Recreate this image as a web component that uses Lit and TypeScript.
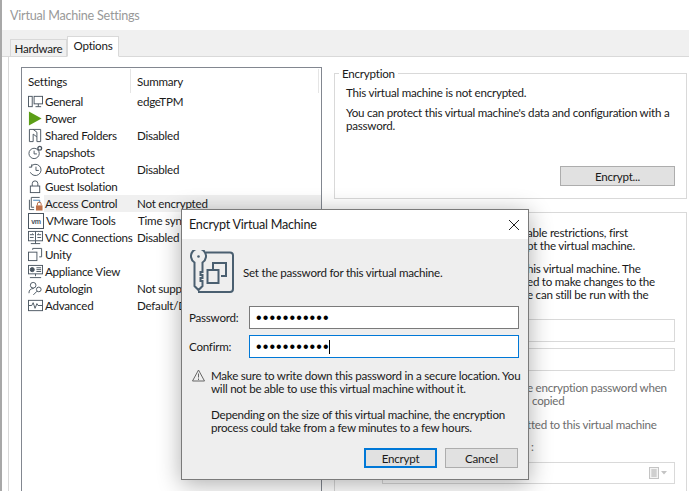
import { LitElement, html, css, svg } from "lit";
import { customElement } from "lit/decorators.js";

const S = "#4a5560";
const ico = (body: unknown) => html`<svg class="ico" width="15" height="15" viewBox="0 0 16 16" fill="none" stroke="${S}" stroke-width="1">${body}</svg>`;
const icons: Record<string, unknown> = {
  general: ico(svg`<rect x="0.5" y="2.5" width="4" height="11"/><rect x="6.5" y="2.5" width="9" height="8"/><path d="M11 10.5v3M8 13.5h6"/>`),
  power: html`<svg class="ico" width="15" height="15" viewBox="0 0 16 16"><path d="M1 0.5 L14.5 8 L1 15.5Z" fill="#5b9e17"/></svg>`,
  shared: ico(svg`<path d="M1.5 1.5h12v13h-4v-5l-4-3v8h-4z"/><path d="M5.5 1.5l4 3v5"/>`),
  snapshots: ico(svg`<circle cx="6.5" cy="9" r="5.5"/><path d="M6.5 6v3.5h3"/><circle cx="12.5" cy="3.5" r="2" stroke-width="1.4"/>`),
  autoprotect: ico(svg`<path d="M3 5a6 6 0 1 1 -0.5 6"/><path d="M1 5.5h3v-3M8.5 5v4h3"/>`),
  guest: ico(svg`<rect x="2.5" y="7.5" width="10" height="7"/><path d="M4.5 7.5V5a3 3 0 0 1 6 0v2.5"/>`),
  access: html`<svg class="ico" width="15" height="15" viewBox="0 0 16 16" fill="none"><path d="M3.5 1.5h9M1.5 4v10.5h5M3.5 1.5V12h3" stroke="${S}"/><path d="M5.5 4.5h7v3" stroke="#3d7fb8"/><path d="M10 10V8.5a2 2 0 0 1 4 0V10" stroke="#b5673f"/><rect x="8.5" y="10" width="7" height="5.5" fill="#c0714a"/></svg>`,
  tools: html`<svg class="ico" width="16" height="16" viewBox="0 0 16 16" fill="none"><rect x="0.5" y="0.5" width="15" height="15" stroke="${S}"/><text class="vm" x="8" y="10.5" text-anchor="middle" fill="${S}">vm</text></svg>`,
  vnc: ico(svg`<rect x="0.5" y="1.5" width="15" height="10"/><path d="M8 1.5v10M2 5h4M6 5L4.5 3.8M10 5h4M10 5l1.5-1.2M2 8h4M10 8h4M8 11.5v3M3 14.5h10"/>`),
  unity: ico(svg`<rect x="0.5" y="5.5" width="9" height="9"/><path d="M5 3V1.5h9.5v9H12"/>`),
  appliance: ico(svg`<rect x="0.5" y="1.5" width="15" height="9"/><circle cx="4.5" cy="6" r="2.2" fill="${S}"/><path d="M9 4h5M9 6h5M9 8h5M8 10.5v2.5M2 14.5h12"/>`),
  autologin: ico(svg`<circle cx="5.5" cy="4.5" r="3"/><path d="M1 13c0-3.5 2-5 5-5"/><circle cx="11.5" cy="9" r="2.5"/><path d="M9.7 10.8l-4 4"/>`),
  advanced: ico(svg`<rect x="0.5" y="2.5" width="15" height="11"/><path d="M1 8h3l1.5-3 2 6 2-5 1.2 2H15"/>`),
};

const rows = [
  ["general", "General", "edgeTPM"],
  ["power", "Power", ""],
  ["shared", "Shared Folders", "Disabled"],
  ["snapshots", "Snapshots", ""],
  ["autoprotect", "AutoProtect", "Disabled"],
  ["guest", "Guest Isolation", ""],
  ["access", "Access Control", "Not encrypted"],
  ["tools", "VMware Tools", "Time sync"],
  ["vnc", "VNC Connections", "Disabled"],
  ["unity", "Unity", ""],
  ["appliance", "Appliance View", ""],
  ["autologin", "Autologin", "Not suppo"],
  ["advanced", "Advanced", "Default/D"],
];

@customElement("app-root")
export class AppRoot extends LitElement {
  static styles = css`
    :host {
      display: block; width: 689px; height: 491px; overflow: hidden; position: relative;
      background: #fff; color: #1a1a1a;
      font: 11.6px/13px "Lato", sans-serif; letter-spacing: -0.24px;
    }
    .window { border-left: 2px solid #a8a8a8; height: 491px; display: flex; flex-direction: column; box-sizing: border-box; }
    .title { height: 30px; flex: none; display: flex; align-items: center; padding-left: 8px; color: #999; font-size: 12.6px; }
    .strip { height: 27px; flex: none; background: #f0f0f0; display: flex; align-items: flex-end; padding-left: 8px; box-sizing: border-box; border-bottom: 1px solid #d9d9d9; }
    .tab { height: 17px; width: 57px; box-sizing: border-box; border: 1px solid #d9d9d9; border-bottom: 0; display: flex; align-items: center; justify-content: center; }
    .tab.on { height: 21px; width: 52px; background: #fff; margin-bottom: -1px; padding-bottom: 3px; border-bottom: 1px solid #fff; }
    .body { flex: 1; min-height: 0; margin-left: 6px; border-left: 1px solid #d9d9d9; padding: 10px 0 0 12px; display: flex; gap: 12px; }
    .list { width: 301px; flex: none; box-sizing: border-box; border: 1px solid #828790; margin-bottom: -20px; }
    .head { display: flex; height: 24px; margin-top: 1px; align-items: center; }
    .head div { box-sizing: border-box; height: 100%; display: flex; align-items: center; border-right: 1px solid #e5e5e5; }
    .head .c1 { width: 109px; padding-left: 6px; }
    .head .c2 { width: 188px; padding-left: 6px; }
    .row { display: flex; height: 17px; align-items: center; padding-left: 6px; white-space: nowrap; }
    .ico { flex: none; display: block; }
    .vm { font: bold 7px "Liberation Sans", sans-serif; stroke: none; }
    .cells { display: flex; flex: 1; height: 17px; align-items: center; margin-left: 1px; }
    .row.sel .cells { background: #f0f0f0; }
    .name { width: 92px; padding-left: 1px; flex: none; }
    .right { flex: 1; display: flex; flex-direction: column; gap: 13px; min-width: 0; padding-top: 6px; }
    .group { border: 1px solid #d9d9d9; position: relative; box-sizing: border-box; width: 353px; flex: none; }
    .legend { position: absolute; left: 4px; top: -7px; background: #fff; padding: 0 3px; }
    .enc { height: 126px; display: flex; flex-direction: column; padding: 12px 11px; }
    .enc p { margin: 0 0 7px; }
    .btn { box-sizing: border-box; background: #e1e1e1; border: 1px solid #adadad; display: flex; align-items: center; justify-content: center; }
    .enc .btn { width: 115px; height: 20px; margin-top: auto; align-self: flex-end; }
    .res { height: 300px; padding-top: 13px; padding-left: 192px; }
    .res p { margin: 0 0 10px; white-space: nowrap; }
    .fields { margin-top: 18px; margin-bottom: 10px; margin-left: -145px; }
    .field { box-sizing: border-box; height: 23px; border: 1px solid #d9d9d9; width: 293px; margin-bottom: 6px; }
    .res .off { color: #6d6d6d; margin: 0; }
    .res .off.sep { margin-top: 11px; }
    .res .off.colon { margin-top: 9px; padding-left: 4px; }
    .copied { padding-left: 5px; }
    .pick { box-sizing: border-box; height: 22px; width: 293px; margin-left: -145px; border: 1px solid #d9d9d9; margin-top: 9px; display: flex; align-items: center; justify-content: flex-end; padding-right: 6px; gap: 2px; }
    .dialog { position: absolute; left: 181px; top: 209px; width: 348px; height: 271px; box-sizing: border-box; border: 1px solid #7a7a7a; background: #eee; box-shadow: 0 4px 22px rgba(0,0,0,.32); display: flex; flex-direction: column; z-index: 2; }
    .dtitle { height: 29px; flex: none; background: #fff; display: flex; align-items: center; justify-content: space-between; padding: 0 8px 0 7px; font-size: 12.6px; }
    .dbody { padding: 11px 9px 0 7px; flex: 1; display: flex; flex-direction: column; }
    .top { display: flex; align-items: center; gap: 7px; height: 44px; margin-left: 1px; }
    .frow { display: flex; align-items: center; height: 23px; margin-top: 6px; }
    .frow label { width: 60px; flex: none; }
    .top + .frow { margin-top: 12px; }
    .input { box-sizing: border-box; width: 270px; height: 23px; background: #fff; border: 1px solid #7a7a7a; display: flex; align-items: center; padding-left: 6px; font: 16px/1 "Liberation Sans", sans-serif; letter-spacing: 1.1px; color: #000; }
    .input.focus { border-color: #0078d7; }
    .caret { width: 1px; height: 14px; background: #000; margin-left: -0.5px; }
    .warn { display: flex; gap: 6px; margin-top: 11px; margin-left: 3px; }
    .warn svg { flex: none; }
    .warn p { margin: 0 0 13px; white-space: nowrap; }
    .btns { display: flex; justify-content: flex-end; gap: 8px; margin-top: auto; margin-bottom: 11px; padding-right: 1px; }
    .btns .btn { width: 73px; height: 20px; }
    .btns .btn.def { border: 2px solid #0078d7; }
  `;

  render() {
    return html`
      <div class="window">
        <div class="title">Virtual Machine Settings</div>
        <div class="strip"><div class="tab">Hardware</div><div class="tab on">Options</div></div>
        <div class="body">
          <div class="list">
            <div class="head"><div class="c1">Settings</div><div class="c2">Summary</div></div>
            <div>
              ${rows.map(([k, n, s]) => html`
                <div class="row ${k === "access" ? "sel" : ""}">
                  ${icons[k]}<div class="cells"><span class="name">${n}</span><span>${s}</span></div>
                </div>`)}
            </div>
          </div>
          <div class="right">
            <div class="group enc">
              <span class="legend">Encryption</span>
              <p>This virtual machine is not encrypted.</p>
              <p>You can protect this virtual machine's data and configuration with a password.</p>
              <div class="btn">Encrypt...</div>
            </div>
            <div class="group res">
              <p>able restrictions, first<br>pt the virtual machine.</p>
              <p>his virtual machine. The<br>ed to make changes to the<br>e can still be run with the</p>
              <div class="fields"><div class="field"></div><div class="field"></div></div>
              <p class="off">e encryption password when<br><span class="copied">copied</span></p>
              <p class="off sep">tted to this virtual machine</p>
              <p class="off colon">:</p>
              <div class="pick">
                <svg width="19" height="12" viewBox="0 0 19 12" fill="none"><rect x="0.5" y="0.5" width="9" height="11" fill="#f4f4f4" stroke="#c4c4c4"/><path d="M2 3h6M2 5h6M2 7h6M2 9h6M4 2v8M6 2v8" stroke="#c4c4c4"/><path d="M12 4h6l-3 3.5z" fill="#c4c4c4"/></svg>
              </div>
            </div>
          </div>
        </div>
      </div>
      <div class="dialog">
        <div class="dtitle">
          <span>Encrypt Virtual Machine</span>
          <svg width="12" height="12" viewBox="0 0 12 12" fill="none" stroke="#222"><path d="M1 1l10 10M11 1L1 11"/></svg>
        </div>
        <div class="dbody">
          <div class="top">
            <svg width="46" height="44" viewBox="0 0 46 44" fill="none" stroke="#4a5f70" stroke-width="2">
              <path d="M16 2.5h24a3 3 0 0 1 3 3V39a3 3 0 0 1-3 3H8"/>
              <path d="M4.5 12.5a7.5 7.5 0 1 1 8 0V22h-2v3h2v3h-2v3h2v5l-4 4-4-4z"/>
              <circle cx="8.5" cy="6.5" r="1.3" fill="#4a5f70" stroke="none"/>
              <path d="M23 19v-6h13v13h-5"/>
              <rect x="17.5" y="20" width="11" height="13"/>
            </svg>
            <span>Set the password for this virtual machine.</span>
          </div>
          <div class="frow"><label>Password:</label><div class="input">•••••••••••</div></div>
          <div class="frow"><label>Confirm:</label><div class="input focus">•••••••••••<span class="caret"></span></div></div>
          <div class="warn">
            <svg width="13" height="13" viewBox="0 0 13 13" fill="none" stroke="#666"><path d="M6.5 1L12.5 12H.5z"/><path d="M6.5 4.5v4M6.5 9.5v1.5"/></svg>
            <div>
              <p>Make sure to write down this password in a secure location. You<br>will not be able to use this virtual machine without it.</p>
              <p>Depending on the size of this virtual machine, the encryption<br>process could take from a few minutes to a few hours.</p>
            </div>
          </div>
          <div class="btns"><div class="btn def">Encrypt</div><div class="btn">Cancel</div></div>
        </div>
      </div>
    `;
  }
}
